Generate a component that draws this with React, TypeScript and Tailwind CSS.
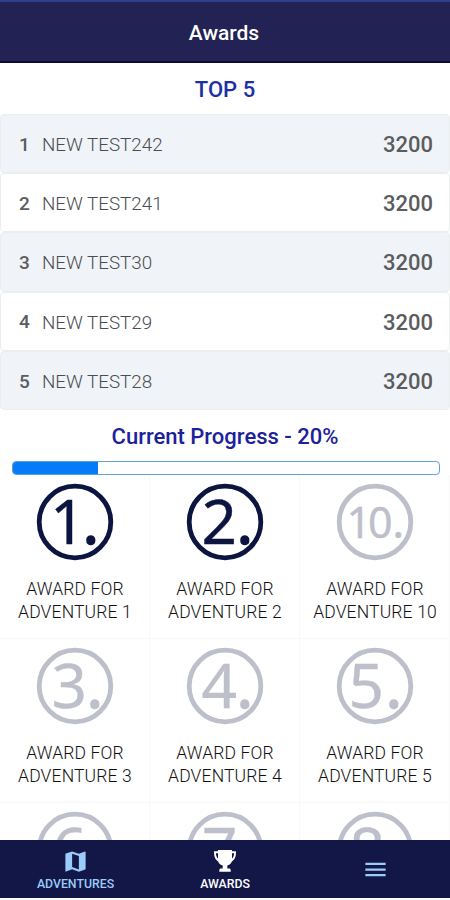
import { MdMap, MdMenu } from "react-icons/md";

type AwardType = {
	num: string;
	earned?: boolean;
	// left edges of the number and the dot inside the 78px badge
	numX: number;
	dotX: number;
};

const leaders = [
	{ name: "NEW TEST242", score: 3200 },
	{ name: "NEW TEST241", score: 3200 },
	{ name: "NEW TEST30", score: 3200 },
	{ name: "NEW TEST29", score: 3200 },
	{ name: "NEW TEST28", score: 3200 },
];

const awards: AwardType[] = [
	{ num: "1", earned: true, numX: 14, dotX: 46.5 },
	{ num: "2", earned: true, numX: 15.5, dotX: 50.5 },
	{ num: "10", numX: 10.5, dotX: 56.5 },
	{ num: "3", numX: 15.5, dotX: 50.5 },
	{ num: "4", numX: 15.5, dotX: 50.5 },
	{ num: "5", numX: 12.5, dotX: 49.5 },
	{ num: "6", numX: 16, dotX: 50.5 },
	{ num: "7", numX: 16, dotX: 50.5 },
	{ num: "8", numX: 13.5, dotX: 50.5 },
];

const progress = 20;

const TrophyIcon = () => (
	<svg viewBox="0 0 24 24" className="w-6 h-6" fill="currentColor">
		<path d="M5 1h14v10c0 2.8-1.9 4.800-4.700 5.600v2.900H16c1 0 1.700.6 1.700 1.600v1.700H6.300v-1.700c0-1 .7-1.600 1.700-1.600h1.700v-2.900C6.900 15.800 5 13.800 5 11z" />
		<path
			d="M5.500 3.300H1.900c0 4.700 1.500 7.600 4.900 8.700M18.500 3.300h3.600c0 4.700-1.500 7.600-4.900 8.700"
			fill="none"
			stroke="currentColor"
			strokeWidth="1.9"
		/>
	</svg>
);

const Badge = ({ award }: { award: AwardType }) => {
	const small = award.num.length > 1;
	const size = small ? 43 : 62;
	const baseline = small ? 54.5 : 61.3;

	return (
		<svg
			viewBox="0 0 78 78"
			className={`w-[78px] h-[78px] font-['Noto_Sans',sans-serif] ${award.earned ? "text-[#0c1440]" : "text-[#bdbfca]"}`}
		>
			<circle cx="39" cy="39" r="35.8" fill="none" stroke="currentColor" strokeWidth="4.8" />
			<text
				x={award.numX}
				y={baseline}
				fontSize={size}
				letterSpacing={small ? -3 : 0}
				fill="currentColor"
				stroke="currentColor"
				strokeWidth="0.4"
			>
				{award.num}
			</text>
			<text
				x={award.dotX}
				y={baseline}
				fontSize={size}
				fill="currentColor"
				stroke="currentColor"
				strokeWidth={small ? 0.5 : 1.6}
			>
				.
			</text>
		</svg>
	);
};

const AwardCell = ({ award }: { award: AwardType }) => (
	<div className="flex flex-col items-center h-[164px] pt-2 pl-px border-r border-b border-[#f8f8f9]">
		<Badge award={award} />
		<p className="mt-[17px] text-center text-[17.5px] leading-[23px] font-light tracking-[0.15px] text-[#111]">
			AWARD FOR
			<br />
			<span className="whitespace-nowrap">ADVENTURE {award.num}</span>
		</p>
	</div>
);

const App = () => {
	return (
		<div className="flex flex-col w-[450px] h-[900px] overflow-hidden bg-white font-[Roboto,sans-serif]">
			<header className="flex items-center justify-center shrink-0 h-[63px] pt-[5px] pr-[2px] bg-[#222354] border-t-2 border-t-[#2f3f8c] border-b-2 border-b-[#0a0840]">
				<h1 className="text-[21px] font-medium text-white">Awards</h1>
			</header>

			<main className="flex-1 min-h-0 overflow-hidden">
				<h2 className="h-[51px] pt-px leading-[51px] text-center text-[22px] font-medium text-[#1d2fa5]">TOP 5</h2>
				<ol>
					{leaders.map((leader, i) => (
						<li
							key={leader.name}
							className="flex items-center h-[59.2px] pt-0.5 pl-[18px] pr-4 border border-[#ebedef] rounded-sm odd:bg-[#f0f4f8]"
						>
							<span className="w-[23px] pt-px text-[19px] font-medium text-[#5a5c60]">{i + 1}</span>
							<span className="flex-1 pt-px text-[18.8px] font-light text-[#4a4c4f]">{leader.name}</span>
							<span className="text-[22px] font-medium text-[#5a5c60]">{leader.score}</span>
						</li>
					))}
				</ol>

				<h2 className="h-[51px] leading-[54px] text-center text-[22px] font-medium text-[#1c2299]">
					Current Progress - {progress}%
				</h2>
				<div className="ml-3 mr-[10px] h-[14px] border border-[#5f9fdc] rounded-[4px] overflow-hidden">
					<div className="h-full bg-[#067bfa]" style={{ width: `${progress}%` }} />
				</div>

				<div className="grid grid-cols-3">
					{awards.map((award) => (
						<AwardCell key={award.num} award={award} />
					))}
				</div>
			</main>

			<nav className="grid grid-cols-3 shrink-0 h-[60px] bg-[#121748] border-b-2 border-white text-[12.3px] leading-4 font-medium">
				<a className="flex flex-col items-center pt-2 pl-px text-[#9bcbf8]">
					<MdMap size={27} />
					<span className="mt-px">ADVENTURES</span>
				</a>
				<a className="flex flex-col items-center pt-[9px] text-white">
					<TrophyIcon />
					<span className="mt-[3px]">AWARDS</span>
				</a>
				<a className="flex items-center justify-center pl-px text-[#9bcbf8]">
					<MdMenu size={27} />
				</a>
			</nav>
		</div>
	);
};

export default App;
